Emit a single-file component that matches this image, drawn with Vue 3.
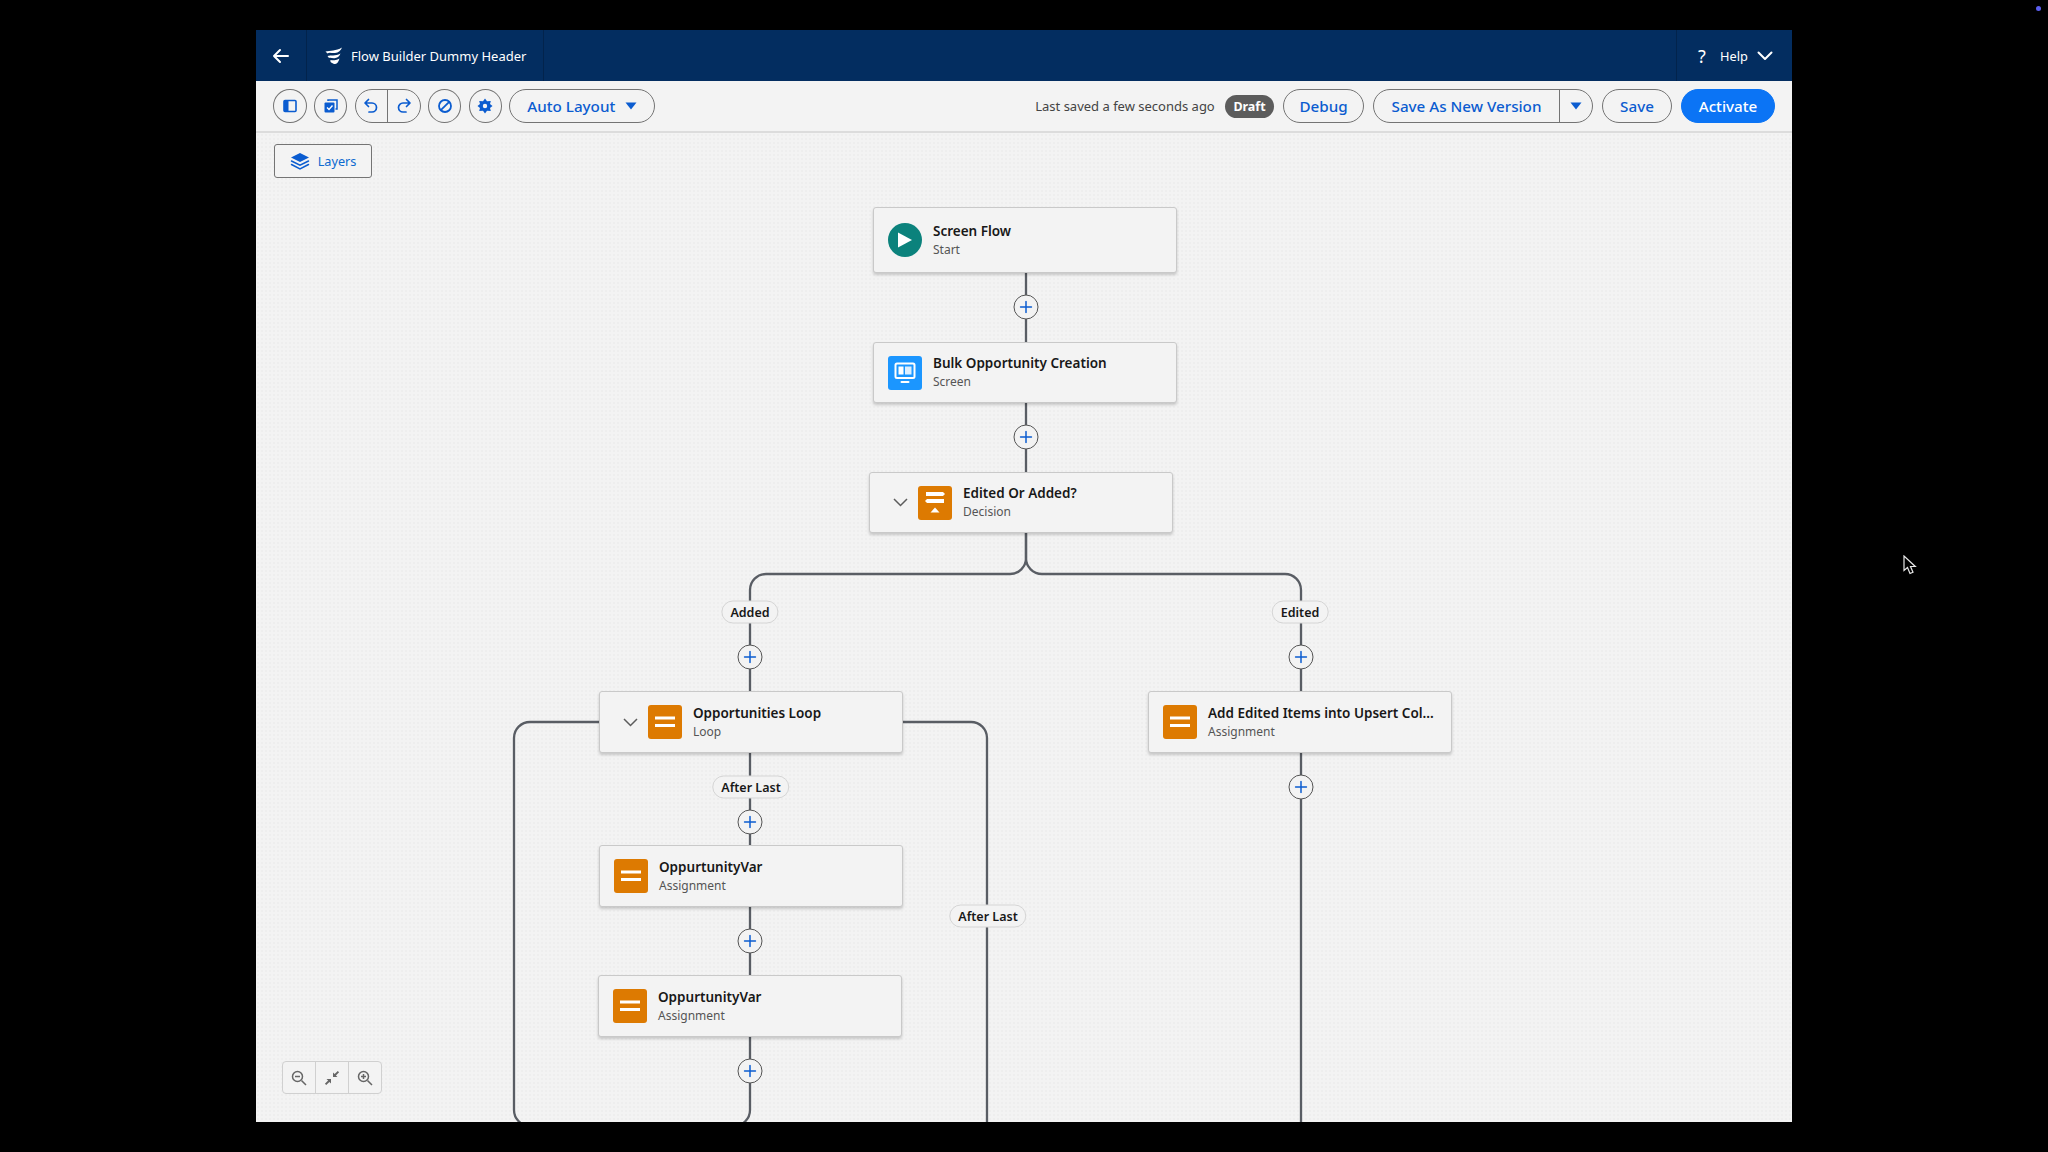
<script setup>
// canvas top-left on the page, node coordinates below are page coordinates
const originX = 256
const originY = 133

const nodes = [
  { id: 1, title: 'Screen Flow', sub: 'Start', x: 873, y: 207, w: 304, h: 66, icon: 'start' },
  { id: 2, title: 'Bulk Opportunity Creation', sub: 'Screen', x: 873, y: 342, w: 304, h: 61, icon: 'screen' },
  { id: 3, title: 'Edited Or Added?', sub: 'Decision', x: 869, y: 472, w: 304, h: 61, icon: 'decision', chevron: true },
  { id: 4, title: 'Opportunities Loop', sub: 'Loop', x: 599, y: 691, w: 304, h: 62, icon: 'assign', chevron: true },
  { id: 5, title: 'Add Edited Items into Upsert Col...', sub: 'Assignment', x: 1148, y: 691, w: 304, h: 62, icon: 'assign' },
  { id: 6, title: 'OppurtunityVar', sub: 'Assignment', x: 599, y: 845, w: 304, h: 62, icon: 'assign' },
  { id: 7, title: 'OppurtunityVar', sub: 'Assignment', x: 598, y: 975, w: 304, h: 62, icon: 'assign' }
]

const pluses = [
  [1026, 307], [1026, 437], [750, 657], [1301, 657],
  [750, 822], [1301, 787], [750, 941], [750, 1071]
]

const labels = [
  { text: 'Added', x: 750, y: 612 },
  { text: 'Edited', x: 1300, y: 612 },
  { text: 'After Last', x: 751, y: 787 },
  { text: 'After Last', x: 988, y: 916 }
]

const lines = [
  'M1026 272V342',
  'M1026 402V472',
  'M1026 532V558A16 16 0 0 1 1010 574H766A16 16 0 0 0 750 590V691',
  'M1026 532V558A16 16 0 0 0 1042 574H1285A16 16 0 0 1 1301 590V692',
  'M1301 752V1124',
  'M599 722H530A16 16 0 0 0 514 738V1110A16 16 0 0 0 530 1126',
  'M903 722H971A16 16 0 0 1 987 738V1124',
  'M750 752V845',
  'M750 906V975',
  'M750 1036V1110A16 16 0 0 1 734 1126'
]

function place(x, y) {
  return { left: `${x - originX}px`, top: `${y - originY}px` }
}

function box(n) {
  return { ...place(n.x, n.y), width: `${n.w}px`, height: `${n.h}px` }
}
</script>

<template>
  <div class="screen">
    <span class="rec-dot"></span>

    <div class="app">
      <header class="top">
        <button class="top-back">
          <svg width="18" height="16" viewBox="0 0 18 16" fill="none" stroke="#fff" stroke-width="2" stroke-linecap="round" stroke-linejoin="round">
            <path d="M16 8H2M8 2 2 8l6 6" />
          </svg>
        </button>
        <div class="top-title">
          <svg width="18" height="18" viewBox="0 0 18 18" fill="#fff">
            <path d="M0.500 4.500C5 3.500 11 4 17 0.500 16 3.500 13.500 5.700 10 6 7 6.300 4 5 2.500 6.500Z" />
            <path d="M2.500 9C6 8 10 9.500 15.500 6.500 14.500 9.800 12 11 9.500 11.200 7 11.400 5.500 10.300 4 11Z" />
            <path d="M5 13.500C8 13 10.500 14 14.500 11.500 13.500 15.500 11.500 17.200 9.500 17 8 16.800 7 15.500 6 15.500Z" />
          </svg>
          <span>Flow Builder Dummy Header</span>
        </div>
        <div class="top-help">
          <span class="help-mark">?</span>
          <span class="help-text">Help</span>
          <svg width="16" height="10" viewBox="0 0 16 10" fill="none" stroke="#fff" stroke-width="2" stroke-linecap="round" stroke-linejoin="round">
            <path d="M1.500 1.500 8 8l6.500-6.500" />
          </svg>
        </div>
      </header>

      <div class="toolbar">
        <button class="round">
          <svg width="14" height="14" viewBox="0 0 14 14">
            <rect x="1" y="1.500" width="12" height="11" rx="1" fill="none" stroke="#0b5cd0" stroke-width="1.600" />
            <rect x="1" y="1.500" width="4.500" height="11" fill="#0b5cd0" />
          </svg>
        </button>
        <button class="round">
          <svg width="16" height="16" viewBox="0 0 16 16" fill="none">
            <path d="M5 3V2h9v9h-1.500" stroke="#0b5cd0" stroke-width="1.500" />
            <rect x="1.500" y="4.500" width="10" height="10" rx="1" fill="#0b5cd0" />
            <path d="m4 9.500 2 2 3.500-4" stroke="#fff" stroke-width="1.400" />
          </svg>
        </button>
        <div class="pair">
          <button class="pair-btn">
            <svg width="16" height="16" viewBox="0 0 16 16" fill="none" stroke="#0b5cd0" stroke-width="1.700" stroke-linecap="round" stroke-linejoin="round">
              <path d="M5.500 1.500 2 5l3.500 3.500M2.500 5H9a4.500 4.500 0 0 1 0 9H6" />
            </svg>
          </button>
          <button class="pair-btn">
            <svg width="16" height="16" viewBox="0 0 16 16" fill="none" stroke="#0b5cd0" stroke-width="1.700" stroke-linecap="round" stroke-linejoin="round">
              <path d="M10.500 1.500 14 5l-3.500 3.500M13.500 5H7a4.500 4.500 0 0 0 0 9h3" />
            </svg>
          </button>
        </div>
        <button class="round">
          <svg width="16" height="16" viewBox="0 0 16 16" fill="none" stroke="#0b5cd0" stroke-width="1.800">
            <circle cx="8" cy="8" r="6" />
            <path d="M12.200 3.800 3.800 12.200" />
          </svg>
        </button>
        <button class="round">
          <svg width="16" height="16" viewBox="0 0 16 16">
            <path fill="#0b5cd0" fill-rule="evenodd" d="M8 .5 10 3.300 13.800 3 13 6 15.500 8 13 10 13.800 13 10 12.700 8 15.500 6 12.700 2.200 13 3 10 .5 8 3 6 2.200 3 6 3.300ZM8 5.800A2.200 2.200 0 1 0 8 10.200 2.200 2.200 0 0 0 8 5.800Z" />
          </svg>
        </button>
        <button class="pill auto">
          <span>Auto Layout</span>
          <svg width="12" height="8" viewBox="0 0 12 8"><path fill="#0b5cd0" d="M.5.500h11L6 7.500Z" /></svg>
        </button>

        <div class="saved">Last saved a few seconds ago</div>
        <span class="draft">Draft</span>
        <button class="pill debug">Debug</button>
        <div class="split">
          <button class="split-main">Save As New Version</button>
          <button class="split-drop">
            <svg width="12" height="8" viewBox="0 0 12 8"><path fill="#0b5cd0" d="M.5.500h11L6 7.500Z" /></svg>
          </button>
        </div>
        <button class="pill save">Save</button>
        <button class="pill activate">Activate</button>
      </div>

      <main class="canvas">
        <svg class="wires" width="1536" height="989" :viewBox="`${originX} ${originY} 1536 989`" fill="none" stroke="#595d64" stroke-width="2.300">
          <path v-for="(d, i) in lines" :key="i" :d="d" />
        </svg>

        <button class="layers">
          <svg width="20" height="19" viewBox="0 0 20 19">
            <path fill="#0b5cd0" d="M10 1 19 5.500 10 10 1 5.500Z" />
            <path fill="none" stroke="#0b5cd0" stroke-width="1.500" stroke-linecap="round" d="M1.500 9 10 13.200 18.500 9M1.500 12.500 10 16.800 18.500 12.500" />
          </svg>
          <span>Layers</span>
        </button>

        <div v-for="n in nodes" :key="n.id" class="node" :class="{ 'has-chevron': n.chevron }" :style="box(n)">
          <svg v-if="n.chevron" class="node-chevron" width="15" height="9" viewBox="0 0 15 9" fill="none" stroke="#5c5c5c" stroke-width="1.500">
            <path d="M1 1l6.500 6.500L14 1" />
          </svg>

          <span v-if="n.icon === 'start'" class="badge badge-start">
            <svg width="16" height="18" viewBox="0 0 16 18"><path fill="#fff" d="M1 1.500v15L15 9Z" /></svg>
          </span>
          <span v-else-if="n.icon === 'screen'" class="badge badge-screen">
            <svg width="22" height="22" viewBox="0 0 22 22" fill="none">
              <rect x="1.500" y="1.500" width="19" height="14.500" rx="1.500" stroke="#fff" stroke-width="2" />
              <rect x="4.500" y="4.500" width="5" height="8" fill="#fff" />
              <rect x="11" y="4.500" width="6.500" height="8" fill="#fff" opacity=".85" />
              <rect x="6.500" y="19" width="9" height="2" rx="1" fill="#fff" />
            </svg>
          </span>
          <span v-else-if="n.icon === 'decision'" class="badge badge-orange">
            <svg width="22" height="23" viewBox="0 0 22 23" fill="#fff">
              <path d="M2 1H19L21 3 19 5H2Z" />
              <path d="M3 8H20V12H3L1 10Z" />
              <path d="M11 16.500 15.500 21.500H6.500Z" />
            </svg>
          </span>
          <span v-else class="badge badge-orange">
            <svg width="20" height="12" viewBox="0 0 20 12" fill="#fff">
              <rect x="0" y="0.500" width="20" height="3" />
              <rect x="0" y="8" width="20" height="3" />
            </svg>
          </span>

          <div class="node-text">
            <div class="node-title">{{ n.title }}</div>
            <div class="node-sub">{{ n.sub }}</div>
          </div>
        </div>

        <span v-for="(l, i) in labels" :key="i" class="edge-label" :style="place(l.x, l.y)">{{ l.text }}</span>

        <button v-for="(p, i) in pluses" :key="i" class="plus" :style="place(p[0], p[1])">
          <svg width="13" height="13" viewBox="0 0 13 13" stroke="#0b5cd0" stroke-width="1.500" stroke-linecap="round">
            <path d="M6.500 1v11M1 6.500h11" />
          </svg>
        </button>

        <div class="zoom">
          <button>
            <svg width="16" height="16" viewBox="0 0 16 16" fill="none" stroke="#666" stroke-width="1.500">
              <circle cx="6.500" cy="6.500" r="5" />
              <path d="M4 6.500h5M10.500 10.500 15 15" />
            </svg>
          </button>
          <button>
            <svg width="16" height="16" viewBox="0 0 16 16" fill="#666">
              <path d="M9 7V2.500L10.600 4.100 13.800 .9 15.100 2.200 11.900 5.400 13.500 7Z" />
              <path d="M7 9V13.500L5.400 11.900 2.200 15.100.9 13.800 4.100 10.600 2.500 9Z" />
            </svg>
          </button>
          <button>
            <svg width="16" height="16" viewBox="0 0 16 16" fill="none" stroke="#666" stroke-width="1.500">
              <circle cx="6.500" cy="6.500" r="5" />
              <path d="M4 6.500h5M6.500 4v5M10.500 10.500 15 15" />
            </svg>
          </button>
        </div>
      </main>
    </div>

    <svg class="pointer" width="14" height="21" viewBox="0 0 14 21">
      <path fill="#000" stroke="#e8e8e8" stroke-width="1.200" d="M1 1v14.500l3.500-3 2.500 6 3-1.300-2.500-5.700h4.800Z" />
    </svg>
  </div>
</template>

<style scoped>
.screen {
  position: relative;
  width: 2048px;
  height: 1152px;
  background: #000;
  overflow: hidden;
  padding: 30px 0 0 256px;
  box-sizing: border-box;
  font-family: "Noto Sans", "Open Sans", sans-serif;
}

button {
  font-family: inherit;
  cursor: pointer;
  padding: 0;
}

.rec-dot {
  position: absolute;
  left: 2036px;
  top: 6px;
  width: 5px;
  height: 5px;
  border-radius: 50%;
  background: #5b5ff0;
}

.pointer {
  position: absolute;
  left: 1903px;
  top: 555px;
}

.app {
  width: 1536px;
  height: 1092px;
  display: flex;
  flex-direction: column;
  overflow: hidden;
  background: #f3f3f3;
}

.top {
  height: 51px;
  flex-shrink: 0;
  display: flex;
  align-items: stretch;
  background: #032d60;
  color: #fff;
}

.top-back {
  width: 51px;
  background: none;
  border: 0;
  border-right: 1px solid #02234c;
  display: flex;
  align-items: center;
  justify-content: center;
}

.top-title {
  width: 237px;
  box-sizing: border-box;
  border-right: 1px solid #02234c;
  display: flex;
  align-items: center;
  gap: 8px;
  padding-left: 18px;
  font-size: 13px;
}

.top-help {
  margin-left: auto;
  width: 116px;
  box-sizing: border-box;
  border-left: 1px solid #02234c;
  display: flex;
  align-items: center;
  padding-left: 21px;
  font-size: 12.800px;
}

.help-mark {
  font-size: 18px;
  width: 22px;
}

.help-text {
  width: 37px;
}

.toolbar {
  height: 50px;
  flex-shrink: 0;
  box-sizing: content-box;
  border-bottom: 2px solid #dcdcdc;
  display: flex;
  align-items: center;
  padding: 0 17px;
  gap: 7.250px;
}

.round {
  width: 33.500px;
  height: 34px;
  flex-shrink: 0;
  border-radius: 50%;
  background: #f3f3f3;
  border: 1px solid #747474;
  display: flex;
  align-items: center;
  justify-content: center;
}

.pair {
  width: 66px;
  height: 34px;
  box-sizing: border-box;
  border: 1px solid #747474;
  border-radius: 17px;
  display: flex;
  overflow: hidden;
}

.pair-btn {
  flex: 1;
  background: none;
  border: 0;
  display: flex;
  align-items: center;
  justify-content: center;
}

.pair-btn + .pair-btn {
  border-left: 1px solid #747474;
}

.pill {
  height: 34px;
  box-sizing: border-box;
  border-radius: 17px;
  background: #f3f3f3;
  border: 1px solid #747474;
  color: #0b5cd0;
  font-size: 15.200px;
  font-weight: 500;
}

.auto {
  width: 146px;
  display: flex;
  align-items: center;
  justify-content: center;
  gap: 10px;
}

.saved {
  margin-left: auto;
  margin-right: 3px;
  font-size: 13px;
  color: #444;
}

.draft {
  width: 49px;
  height: 23px;
  border-radius: 12px;
  background: #5c5c5c;
  color: #fff;
  font-size: 12.500px;
  font-weight: 700;
  display: flex;
  align-items: center;
  justify-content: center;
  margin-right: 1.750px;
}

.debug {
  width: 81px;
  margin-right: 1.750px;
}

.split {
  width: 220px;
  height: 34px;
  box-sizing: border-box;
  border: 1px solid #747474;
  border-radius: 17px;
  display: flex;
  overflow: hidden;
  margin-right: 1.750px;
}

.split-main {
  width: 186px;
  background: none;
  border: 0;
  border-right: 1px solid #747474;
  color: #0b5cd0;
  font-size: 15.200px;
  font-weight: 500;
}

.split-drop {
  flex: 1;
  background: none;
  border: 0;
  display: flex;
  align-items: center;
  justify-content: center;
}

.save {
  width: 70px;
  margin-right: 1.750px;
}

.activate {
  width: 94px;
  background: #0b74f5;
  border-color: #0b74f5;
  color: #fff;
}

.canvas {
  position: relative;
  flex: 1;
  background-color: #f3f3f3;
  background-image: radial-gradient(#eeeeee 1px, transparent 1px);
  background-size: 4px 4px;
}

.wires {
  position: absolute;
  left: 0;
  top: 0;
}

.layers {
  position: absolute;
  left: 18px;
  top: 11px;
  width: 98px;
  height: 34px;
  box-sizing: border-box;
  background: #f3f3f3;
  border: 1px solid #747474;
  border-radius: 3px;
  color: #0b6ad0;
  font-size: 12.700px;
  display: flex;
  align-items: center;
  justify-content: center;
  gap: 8px;
}

.node {
  position: absolute;
  box-sizing: border-box;
  background: #f3f3f3;
  border: 1px solid #c9c9c9;
  border-radius: 3px;
  box-shadow: 0 2px 3px rgba(0, 0, 0, .18);
  display: flex;
  align-items: center;
  padding-left: 14px;
}

.node.has-chevron {
  padding-left: 23px;
}

.node-chevron {
  margin-right: 10px;
}

.badge {
  width: 34px;
  height: 34px;
  flex-shrink: 0;
  display: flex;
  align-items: center;
  justify-content: center;
  border-radius: 3px;
}

.badge-start {
  border-radius: 50%;
  background: #0b827c;
}

.badge-screen {
  background: #1b96ff;
}

.badge-orange {
  background: #dd7a01;
}

.node-text {
  margin-left: 11px;
  white-space: nowrap;
}

.node-title {
  font-size: 13.500px;
  font-weight: 600;
  line-height: 18px;
  color: #181818;
}

.node-sub {
  font-size: 12px;
  line-height: 19px;
  color: #555;
}

.edge-label {
  position: absolute;
  transform: translate(-50%, -50%);
  height: 23px;
  box-sizing: border-box;
  padding: 0 8px;
  border: 1px solid #d5d5d5;
  border-radius: 12px;
  background: #f3f3f3;
  font-size: 12.500px;
  font-weight: 600;
  color: #181818;
  display: flex;
  align-items: center;
  white-space: nowrap;
}

.plus {
  position: absolute;
  transform: translate(-50%, -50%);
  width: 25px;
  height: 25px;
  border-radius: 50%;
  background: #f3f3f3;
  border: 1px solid #555;
  display: flex;
  align-items: center;
  justify-content: center;
}

.zoom {
  position: absolute;
  left: 26px;
  top: 928px;
  width: 100px;
  height: 33px;
  box-sizing: border-box;
  border: 1px solid #d0d0d0;
  border-radius: 4px;
  display: flex;
  background: #f3f3f3;
}

.zoom button {
  flex: 1;
  background: none;
  border: 0;
  display: flex;
  align-items: center;
  justify-content: center;
}

.zoom button + button {
  border-left: 1px solid #d0d0d0;
}
</style>
